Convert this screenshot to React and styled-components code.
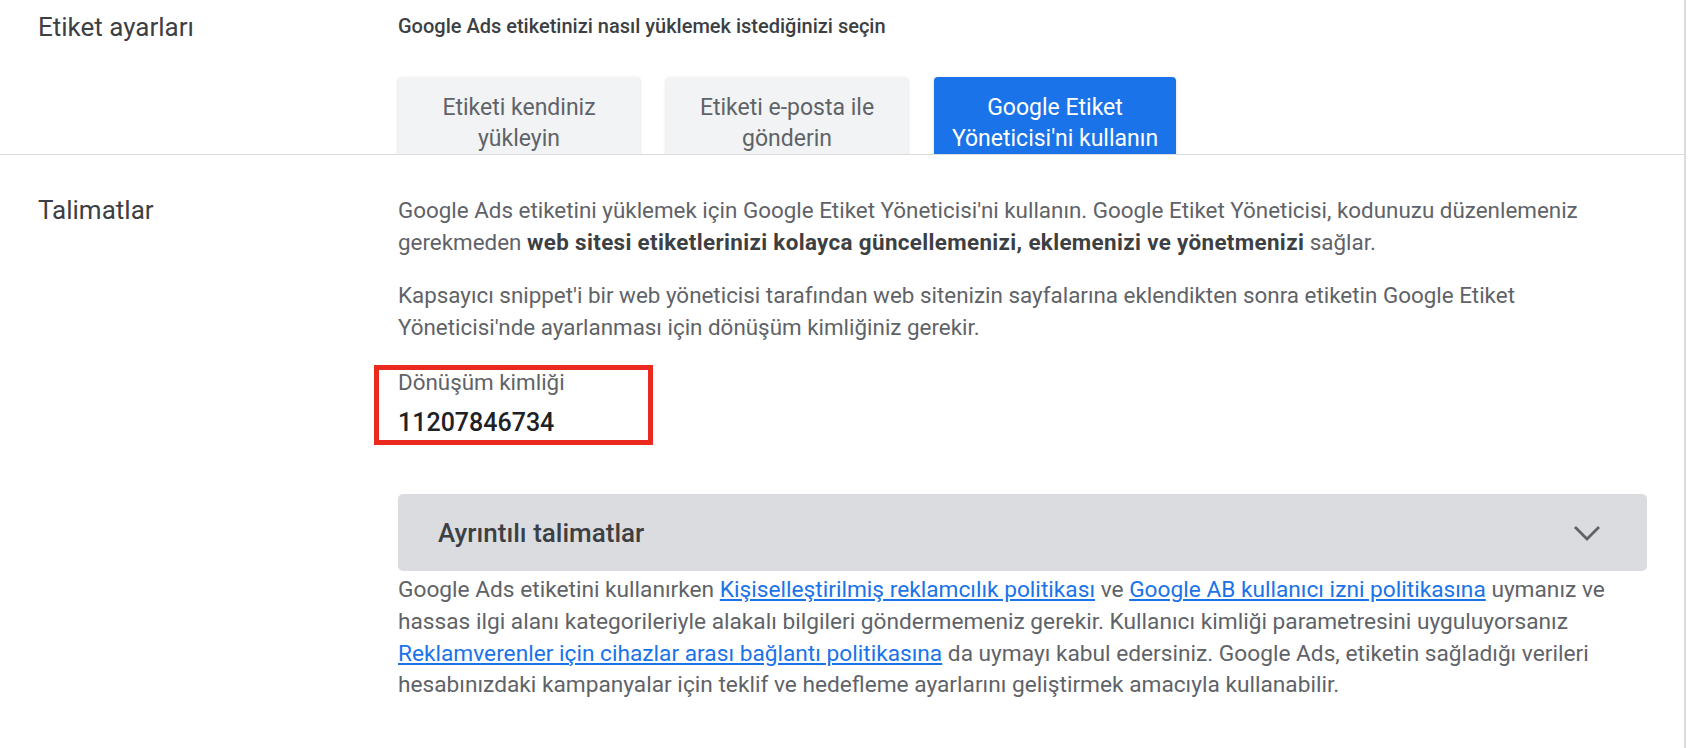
import React from 'react';
import styled, { createGlobalStyle } from 'styled-components';

const COLORS = {
  title: '#3c4043',
  body: '#5f6368',
  strong: '#202124',
  border: '#dadce0',
  blue: '#1a73e8',
  chip: '#f1f3f4',
  highlight: '#ea2a1f',
};

const GlobalStyle = createGlobalStyle`
  html, body {
    margin: 0;
    padding: 0;
    background: #fff;
  }
  body {
    font-family: Roboto, "Liberation Sans", Arial, sans-serif;
    -webkit-font-smoothing: antialiased;
  }
`;

const options = [
  { id: 'self', label: 'Etiketi kendiniz yükleyin' },
  { id: 'email', label: 'Etiketi e-posta ile gönderin' },
  { id: 'gtm', label: "Google Etiket Yöneticisi'ni kullanın" },
];

function ChevronDown() {
  return (
    <svg width="28" height="18" viewBox="0 0 28 18" aria-hidden="true">
      <polyline
        points="2,3 14,15 26,3"
        fill="none"
        stroke="#5f6368"
        strokeWidth="2.8"
      />
    </svg>
  );
}

function App() {
  return (
    <>
      <GlobalStyle />
      <Page>
        <SettingsRow $clipped>
          <RowLabel>Etiket ayarları</RowLabel>
          <RowBody>
            <Prompt>Google Ads etiketinizi nasıl yüklemek istediğinizi seçin</Prompt>
            <OptionList>
              {options.map((o) => (
                <OptionButton key={o.id} $active={o.id === 'gtm'}>
                  {o.label}
                </OptionButton>
              ))}
            </OptionList>
          </RowBody>
        </SettingsRow>

        <SettingsRow>
          <RowLabel>Talimatlar</RowLabel>
          <RowBody>
            <Paragraph>
              Google Ads etiketini yüklemek için Google Etiket Yöneticisi'ni kullanın. Google Etiket
              Yöneticisi, kodunuzu düzenlemeniz gerekmeden{' '}
              <b>web sitesi etiketlerinizi kolayca güncellemenizi, eklemenizi ve yönetmenizi</b>{' '}
              sağlar.
            </Paragraph>
            <Paragraph>
              Kapsayıcı snippet'i bir web yöneticisi tarafından web sitenizin sayfalarına
              eklendikten sonra etiketin Google Etiket Yöneticisi'nde ayarlanması için dönüşüm
              kimliğiniz gerekir.
            </Paragraph>

            <IdField>
              <FieldLabel>Dönüşüm kimliği</FieldLabel>
              <FieldValue>11207846734</FieldValue>
            </IdField>

            <Accordion type="button">
              <AccordionTitle>Ayrıntılı talimatlar</AccordionTitle>
              <ChevronDown />
            </Accordion>

            <Disclaimer>
              Google Ads etiketini kullanırken{' '}
              <PolicyLink href="#">Kişiselleştirilmiş reklamcılık politikası</PolicyLink> ve{' '}
              <PolicyLink href="#">Google AB kullanıcı izni politikasına</PolicyLink> uymanız ve
              hassas ilgi alanı kategorileriyle alakalı bilgileri göndermemeniz gerekir. Kullanıcı
              kimliği parametresini uyguluyorsanız{' '}
              <PolicyLink href="#">Reklamverenler için cihazlar arası bağlantı politikasına</PolicyLink>{' '}
              da uymayı kabul edersiniz. Google Ads, etiketin sağladığı verileri hesabınızdaki
              kampanyalar için teklif ve hedefleme ayarlarını geliştirmek amacıyla kullanabilir.
            </Disclaimer>
          </RowBody>
        </SettingsRow>
      </Page>
    </>
  );
}

const Page = styled.main`
  width: 1686px;
  min-height: 748px;
  box-sizing: border-box;
  border-right: 2px solid ${COLORS.border};
`;

const SettingsRow = styled.section`
  display: grid;
  grid-template-columns: 398px 1fr;
  padding-right: 37px;
  box-sizing: border-box;
  padding-top: ${(p) => (p.$clipped ? '12px' : '40px')};
  height: ${(p) => (p.$clipped ? '154px' : 'auto')};
  overflow: ${(p) => (p.$clipped ? 'hidden' : 'visible')};
  border-top: ${(p) => (p.$clipped ? 'none' : `1px solid ${COLORS.border}`)};
`;

const RowLabel = styled.h2`
  margin: 0;
  padding-left: 38px;
  font-size: 26px;
  font-weight: 400;
  line-height: 30px;
  color: ${COLORS.title};
`;

const RowBody = styled.div`
  display: flex;
  flex-direction: column;
  align-items: flex-start;
  min-width: 0;
`;

const Prompt = styled.p`
  margin: 0;
  font-size: 20px;
  font-weight: 500;
  line-height: 28px;
  color: ${COLORS.title};
`;

const OptionList = styled.div`
  display: flex;
  align-items: flex-start;
  gap: 26px;
  margin-top: 37px;
`;

const OptionButton = styled.button`
  display: block;
  width: 242px;
  padding: 15px 8px 20px;
  box-sizing: border-box;
  border: none;
  border-radius: 4px;
  font-family: inherit;
  font-size: 23px;
  line-height: 31px;
  text-align: center;
  cursor: pointer;
  background: ${(p) => (p.$active ? COLORS.blue : COLORS.chip)};
  color: ${(p) => (p.$active ? '#fff' : COLORS.body)};
  box-shadow: 0 1px 3px rgba(60, 64, 67, 0.22);
`;

const Paragraph = styled.p`
  margin: 0 0 22px;
  font-size: 22.4px;
  line-height: 31.6px;
  color: ${COLORS.body};

  b {
    font-weight: 700;
    letter-spacing: 0.35px;
    color: ${COLORS.title};
  }
`;

const IdField = styled.div`
  width: 279px;
  box-sizing: border-box;
  margin: 0 0 49px -24px;
  padding: 0 0 2px 19px;
  border: 5px solid ${COLORS.highlight};
  display: flex;
  flex-direction: column;
  gap: 14px;
`;

const FieldLabel = styled.span`
  font-size: 22.4px;
  line-height: 24px;
  color: ${COLORS.body};
`;

const FieldValue = styled.span`
  font-size: 25px;
  font-weight: 500;
  line-height: 30px;
  color: ${COLORS.strong};
`;

const Accordion = styled.button`
  align-self: stretch;
  height: 77px;
  padding: 0 46px 0 40px;
  display: flex;
  align-items: center;
  justify-content: space-between;
  border: none;
  border-radius: 5px;
  background: ${COLORS.border};
  font-family: inherit;
  cursor: pointer;
`;

const AccordionTitle = styled.span`
  font-size: 26px;
  font-weight: 500;
  color: ${COLORS.title};
`;

const Disclaimer = styled.p`
  margin: 3px 0 0;
  font-size: 22.7px;
  line-height: 31.6px;
  color: ${COLORS.body};
`;

const PolicyLink = styled.a`
  color: ${COLORS.blue};
  text-decoration: underline;
  text-underline-offset: 2px;
`;

export default App;
